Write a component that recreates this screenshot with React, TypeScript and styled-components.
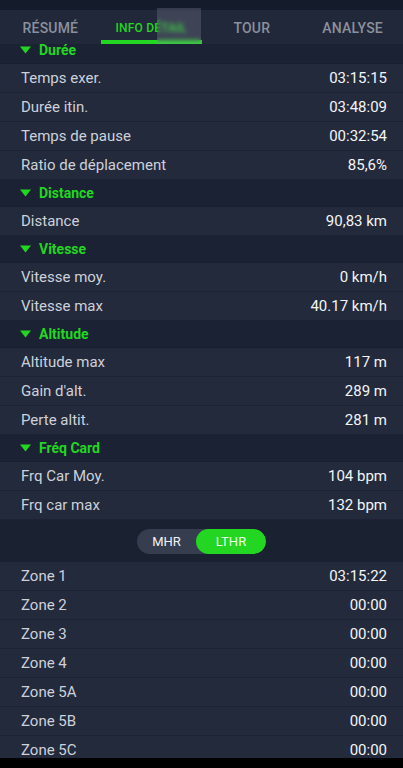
import React, { useLayoutEffect, useRef } from 'react';
import styled, { createGlobalStyle } from 'styled-components';

const GlobalStyle = createGlobalStyle`
  html, body {
    margin: 0;
    padding: 0;
    background: #000;
  }
  body {
    font-family: Roboto, "Noto Sans", "Liberation Sans", sans-serif;
  }
`;

const GREEN = '#22d622';

const Screen = styled.div`
  width: 403px;
  height: 768px;
  display: flex;
  flex-direction: column;
  background: #232a3c;
  overflow: hidden;
`;

const StatusStrip = styled.div`
  height: 10px;
  flex: 0 0 auto;
  background: #141b2a;
`;

const TabBar = styled.div`
  position: relative;
  height: 34px;
  flex: 0 0 auto;
  display: grid;
  grid-template-columns: repeat(4, 1fr);
  background: #212839;
  z-index: 2;
`;

const Tab = styled.div<{ $active?: boolean }>`
  position: relative;
  display: flex;
  align-items: center;
  justify-content: center;
  padding-top: 2px;
  font-size: ${p => (p.$active ? '12px' : '14px')};
  font-weight: 500;
  letter-spacing: 0.2px;
  color: ${p => (p.$active ? GREEN : '#8b909e')};

  &::after {
    content: '';
    display: ${p => (p.$active ? 'block' : 'none')};
    position: absolute;
    left: 0;
    right: 0;
    bottom: 0;
    height: 4px;
    background: ${GREEN};
  }
`;

const Smudge = styled.div`
  position: absolute;
  left: 157px;
  top: -2px;
  width: 44px;
  height: 36px;
  background: rgba(170, 170, 190, 0.22);
  backdrop-filter: blur(2px);
`;

const Scroller = styled.div`
  flex: 1;
  overflow-y: auto;
  scrollbar-width: none;
  &::-webkit-scrollbar {
    display: none;
  }
`;

const SectionHeader = styled.div`
  height: 27px;
  display: flex;
  align-items: center;
  gap: 8px;
  padding-left: 20px;
  background: #1b2233;
  border-bottom: 1px solid #182030;
  box-sizing: border-box;
  color: ${GREEN};
  font-size: 14px;
  font-weight: 700;
`;

const Row = styled.div`
  height: 29px;
  display: flex;
  align-items: center;
  justify-content: space-between;
  padding: 0 16px 0 21px;
  background: #232a3c;
  border-bottom: 1px solid #1d2334;
  box-sizing: border-box;
  font-size: 15px;
`;

const Label = styled.span`
  color: #cdd1da;
`;

const Value = styled.span`
  color: #f4f5f8;
`;

const ToggleBand = styled.div`
  height: 42px;
  display: flex;
  align-items: center;
  justify-content: center;
  background: #1a2130;
`;

const Toggle = styled.div`
  display: flex;
  height: 25px;
  border-radius: 13px;
  background: #353d4f;
  overflow: hidden;
`;

const ToggleOption = styled.div<{ $on?: boolean }>`
  display: flex;
  align-items: center;
  justify-content: center;
  width: ${p => (p.$on ? '70px' : '59px')};
  border-radius: 13px;
  background: ${p => (p.$on ? GREEN : 'transparent')};
  color: ${p => (p.$on ? '#e6ffe6' : '#f2f3f6')};
  font-size: 13px;
  font-weight: 400;
`;

const NavStrip = styled.div`
  height: 10px;
  flex: 0 0 auto;
  background: #000;
`;

const Caret = () => (
  <svg width="11" height="8" viewBox="0 0 11 8">
    <path d="M0 0.5 H11 L5.5 7.5 Z" fill={GREEN} />
  </svg>
);

type Section = { title: string; rows: [string, string][] };

const sections: Section[] = [
  {
    title: 'Durée',
    rows: [
      ['Temps exer.', '03:15:15'],
      ['Durée itin.', '03:48:09'],
      ['Temps de pause', '00:32:54'],
      ['Ratio de déplacement', '85,6%'],
    ],
  },
  { title: 'Distance', rows: [['Distance', '90,83 km']] },
  {
    title: 'Vitesse',
    rows: [
      ['Vitesse moy.', '0 km/h'],
      ['Vitesse max', '40.17 km/h'],
    ],
  },
  {
    title: 'Altitude',
    rows: [
      ['Altitude max', '117 m'],
      ["Gain d'alt.", '289 m'],
      ['Perte altit.', '281 m'],
    ],
  },
  {
    title: 'Fréq Card',
    rows: [
      ['Frq Car Moy.', '104 bpm'],
      ['Frq car max', '132 bpm'],
    ],
  },
];

const zones: [string, string][] = [
  ['Zone 1', '03:15:22'],
  ['Zone 2', '00:00'],
  ['Zone 3', '00:00'],
  ['Zone 4', '00:00'],
  ['Zone 5A', '00:00'],
  ['Zone 5B', '00:00'],
  ['Zone 5C', '00:00'],
];

const tabs = ['RÉSUMÉ', 'INFO DÉTAIL', 'TOUR', 'ANALYSE'];

const App: React.FC = () => {
  const scrollRef = useRef<HTMLDivElement>(null);

  // the list in the capture is scrolled a little past the top
  useLayoutEffect(() => {
    if (scrollRef.current) scrollRef.current.scrollTop = 7;
  }, []);

  return (
    <>
      <GlobalStyle />
      <Screen>
        <StatusStrip />
        <TabBar>
          {tabs.map((t, i) => (
            <Tab key={t} $active={i === 1}>
              {t}
            </Tab>
          ))}
          <Smudge />
        </TabBar>
        <Scroller ref={scrollRef}>
          {sections.map(s => (
            <React.Fragment key={s.title}>
              <SectionHeader>
                <Caret />
                {s.title}
              </SectionHeader>
              {s.rows.map(([l, v]) => (
                <Row key={l}>
                  <Label>{l}</Label>
                  <Value>{v}</Value>
                </Row>
              ))}
            </React.Fragment>
          ))}
          <ToggleBand>
            <Toggle>
              <ToggleOption>MHR</ToggleOption>
              <ToggleOption $on>LTHR</ToggleOption>
            </Toggle>
          </ToggleBand>
          {zones.map(([l, v]) => (
            <Row key={l}>
              <Label>{l}</Label>
              <Value>{v}</Value>
            </Row>
          ))}
        </Scroller>
        <NavStrip />
      </Screen>
    </>
  );
};

export default App;
